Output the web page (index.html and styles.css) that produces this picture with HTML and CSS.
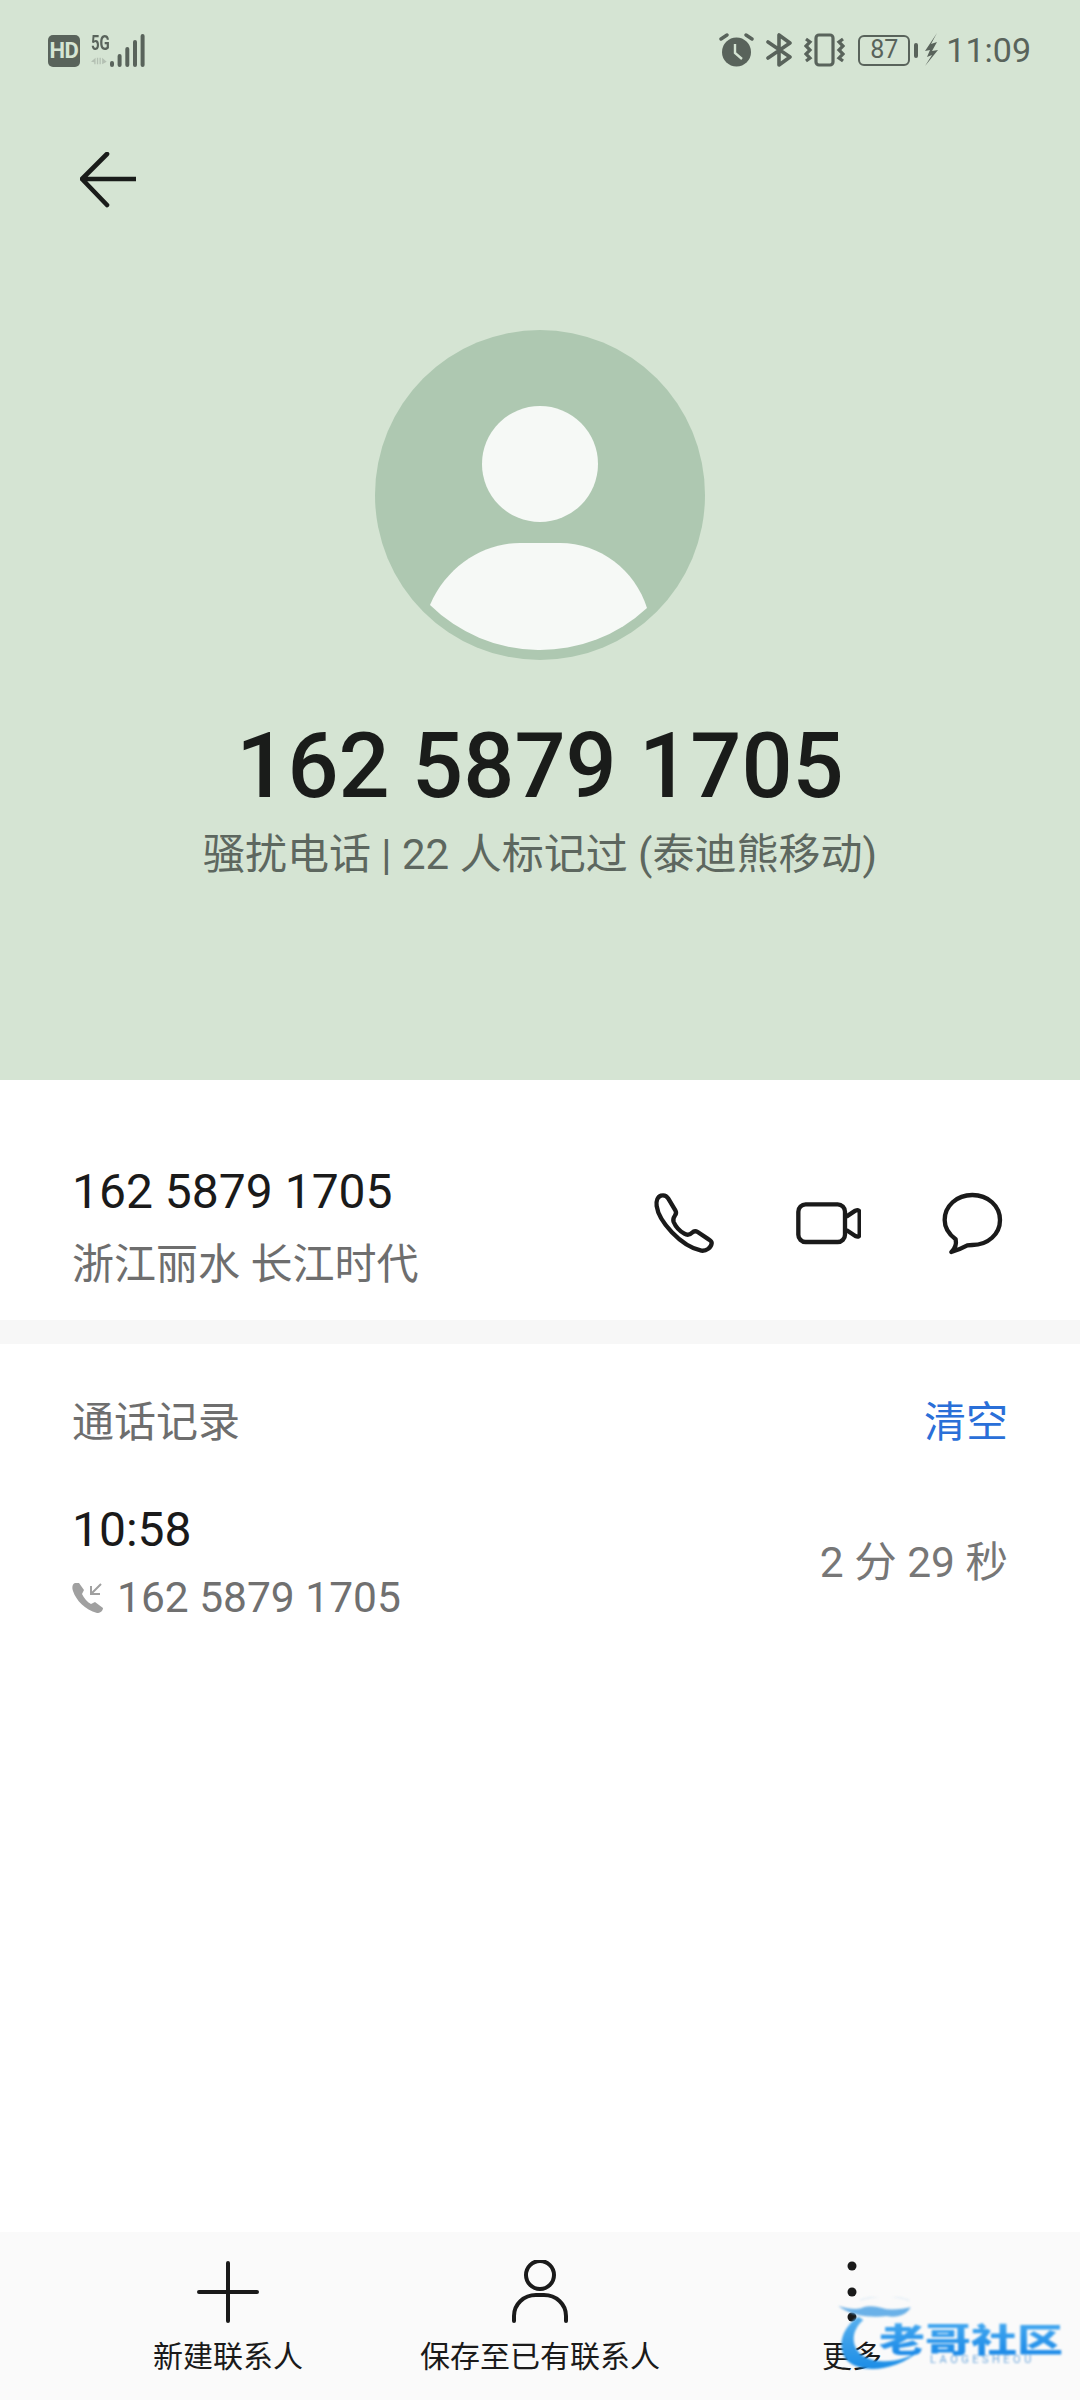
FILE: index.html
```html
<!DOCTYPE html>
<html lang="zh-CN">

<head>
    <meta charset="UTF-8">
    <meta name="viewport" content="width=device-width, initial-scale=1.0">
    <title>162 5879 1705</title>
    <link rel="stylesheet" href="styles.css">
</head>

<body>
    <div class="phone">
        <header class="hero">
            <div class="status-bar">
                <div class="status-left">
                    <span class="hd">HD</span>
                    <div class="signal">
                        <div class="net">
                            <span class="net-5g">5G</span>
                            <svg class="net-arrows" width="26" height="12" viewBox="0 0 26 12">
                                <path d="M0 7 L7 1 V11 H5 V8 Z M11 1 H9 V11 H11 Z M13 1 H15 V11 H13 Z M17 1 L24 7 L17 11 Z" fill="#b4c0b3" />
                            </svg>
                        </div>
                        <svg class="bars" width="36" height="34" viewBox="0 0 36 34">
                            <g fill="none" stroke="#59635b" stroke-width="4" stroke-linecap="round">
                                <path d="M2 30 V32" />
                                <path d="M9.6 23 V32" />
                                <path d="M17.3 16 V32" />
                                <path d="M25 9 V32" />
                                <path d="M32.6 3 V32" />
                            </g>
                        </svg>
                    </div>
                </div>
                <div class="status-right">
                    <svg width="35" height="34" viewBox="0 0 35 34">
                        <circle cx="17.5" cy="19" r="14.5" fill="#59635b" />
                        <path d="M16 11 V20 L23 26" fill="none" stroke="#d5e4d3" stroke-width="2.4" />
                        <path d="M2 6 L8 2 M33 6 L27 2" stroke="#59635b" stroke-width="3.4" stroke-linecap="round" />
                    </svg>
                    <svg width="27" height="34" viewBox="0 0 27 34">
                        <path d="M2 25 L24 10 L13 2 V32 L24 24 L2 9" fill="none" stroke="#59635b" stroke-width="3.6" stroke-linejoin="round" stroke-linecap="round" />
                    </svg>
                    <svg width="41" height="34" viewBox="0 0 41 34">
                        <rect x="12" y="2" width="17" height="30" rx="3" fill="none" stroke="#59635b" stroke-width="3.2" />
                        <path d="M2 6 L6 9 L2 13 L6 17 L2 21 L6 25 L2 28 M39 6 L35 9 L39 13 L35 17 L39 21 L35 25 L39 28" fill="none" stroke="#59635b" stroke-width="3.2" />
                    </svg>
                    <div class="battery">
                        <span class="battery-body">87</span>
                        <span class="battery-nub"></span>
                    </div>
                    <svg class="bolt" width="15" height="34" viewBox="0 0 15 34">
                        <path d="M13 0 L1 18 L6 17 L3 24 L8 22 L1 33 L14 17 L8 18 L13 9 L7 11 Z" fill="#59635b" />
                    </svg>
                    <span class="clock">11:09</span>
                </div>
            </div>

            <div class="back">
                <svg width="56" height="56" viewBox="0 0 56 56">
                    <path d="M27 2 L2 27 L27 53 M3 27 H55" fill="none" stroke="#1a1c1a" stroke-width="4.6" stroke-linecap="round" stroke-linejoin="round" />
                </svg>
            </div>

            <svg class="avatar" width="330" height="330" viewBox="0 0 330 330">
                <circle cx="165" cy="165" r="165" fill="#aec8b1" />
                <circle cx="165" cy="134" r="58" fill="#f6f9f6" />
                <path d="M55 275 C 72 235 110 213 145 213 H185 C 225 213 260 240 272 278 A 157 157 0 0 1 55 275 Z" fill="#f6f9f6" />
            </svg>

            <h1 class="hero-number">162 5879 1705</h1>
            <p class="hero-note">骚扰电话 | 22 人标记过 (泰迪熊移动)</p>
        </header>

        <section class="number-row">
            <div class="number-info">
                <div class="number-main">162 5879 1705</div>
                <div class="number-place">浙江丽水 长江时代</div>
            </div>
            <div class="number-actions">
                <svg width="65" height="65" viewBox="95 125 195 195">
                    <path d="M122 139 C 112 142 107 155 109 170 C 115 215 180 290 243 304 C 258 306 272 295 274 282 C 275 276 270 273 265 270 L 232 248 C 226 244 220 245 215 250 C 208 257 200 258 192 253 C 178 245 165 230 160 218 C 157 210 160 204 164 198 C 168 193 168 188 165 183 L 144 148 C 139 140 130 137 122 139 Z" fill="none" stroke="#1a1a1a" stroke-width="13" stroke-linejoin="round" />
                </svg>
                <svg width="65" height="65" viewBox="525 125 195 195">
                    <rect x="532" y="165" width="140" height="113" rx="22" fill="none" stroke="#1a1a1a" stroke-width="13" />
                    <path d="M676 202 L703 184 Q716 179 716 192 V252 Q716 266 703 260 L676 242" fill="none" stroke="#1a1a1a" stroke-width="13" stroke-linejoin="round" />
                </svg>
                <svg width="65" height="65" viewBox="958 125 195 195">
                    <path d="M1055 137 C 1008 137 972 170 972 212 C 972 235 985 255 1005 270 C 1008 285 1003 298 992 308 C 1010 303 1025 296 1040 288 C 1045 287 1050 287 1055 287 C 1102 287 1138 254 1138 212 C 1138 170 1102 137 1055 137 Z" fill="none" stroke="#1a1a1a" stroke-width="13" stroke-linejoin="round" />
                </svg>
            </div>
        </section>

        <div class="band"></div>

        <section class="calls">
            <div class="calls-head">
                <span class="calls-title">通话记录</span>
                <span class="calls-clear">清空</span>
            </div>
            <div class="call-item">
                <div>
                    <div class="call-time">10:58</div>
                    <div class="call-number">
                        <svg width="32" height="32" viewBox="0 0 32 32">
                            <path d="M3 1 C 0 2 0 6 1 9 C 4 18 13 28 25 31 C 28 31 31 29 31 26 L 23 20 L 19 22 C 15 20 12 16 10 12 L 12 8 L 7 1 Z" fill="#a0a0a0" />
                            <path d="M29 2 L19 12 M19 4 V12 H28" fill="none" stroke="#a0a0a0" stroke-width="2" />
                        </svg>
                        <span>162 5879 1705</span>
                    </div>
                </div>
                <div class="call-length">2 分 29 秒</div>
            </div>
        </section>

        <nav class="bottom-bar">
            <div class="bottom-item">
                <svg width="64" height="64" viewBox="0 0 64 64">
                    <path d="M32 3 V61 M3 32 H61" stroke="#1a1a1a" stroke-width="4" stroke-linecap="round" />
                </svg>
                <span>新建联系人</span>
            </div>
            <div class="bottom-item">
                <svg width="64" height="64" viewBox="0 0 64 64">
                    <circle cx="32" cy="15" r="14" fill="none" stroke="#1a1a1a" stroke-width="4" />
                    <path d="M6 61 V56 C 6 44 16 35 28 35 H36 C 48 35 58 44 58 56 V61" fill="none" stroke="#1a1a1a" stroke-width="4" stroke-linecap="round" />
                </svg>
                <span>保存至已有联系人</span>
            </div>
            <div class="bottom-item">
                <svg width="64" height="64" viewBox="0 0 64 64">
                    <circle cx="32" cy="6" r="4.5" fill="#1a1a1a" />
                    <circle cx="32" cy="32" r="4.5" fill="#1a1a1a" />
                    <circle cx="32" cy="57" r="4.5" fill="#1a1a1a" />
                </svg>
                <span>更多</span>
            </div>
        </nav>

        <div class="watermark">
            <svg class="watermark-mark" width="100" height="76" viewBox="171 231 300 228">
                <defs>
                    <linearGradient id="swoosh" x1="0" y1="0" x2="0" y2="1">
                        <stop offset="0" stop-color="#58b0ee" />
                        <stop offset="1" stop-color="#1b8de6" />
                    </linearGradient>
                </defs>
                <path d="M235 290 C 190 320 170 370 195 415 C 225 455 330 470 430 385 C 370 430 290 435 245 405 C 210 375 215 330 250 300 Z" fill="url(#swoosh)" />
                <path d="M175 258 C 210 268 235 270 250 262 C 270 255 300 262 320 268 C 350 270 375 265 392 262 C 380 285 350 295 320 288 C 290 292 260 290 235 285 C 210 280 190 270 175 258 Z" fill="#5aa9e6" opacity="0.9" />
                <path d="M240 240 C 290 225 350 225 388 242" fill="none" stroke="#d9e9f6" stroke-width="3" />
            </svg>
            <span class="watermark-name">老哥社区</span>
            <span class="watermark-sub">LAOGESHEOU</span>
        </div>
    </div>
</body>

</html>
```

FILE: styles.css
```css
* {
    box-sizing: border-box;
}

body {
    margin: 0;
    background: #fff;
    font-family: Roboto, "Noto Sans CJK SC", sans-serif;
}

.phone {
    position: relative;
    width: 1080px;
    height: 2400px;
    display: flex;
    flex-direction: column;
    overflow: hidden;
    background: #fff;
}

/* green top part */
.hero {
    height: 1080px;
    background: #d5e4d3;
    display: flex;
    flex-direction: column;
    align-items: center;
}

.status-bar {
    width: 100%;
    height: 100px;
    padding: 33px 49px 0 48px;
    display: flex;
    justify-content: space-between;
    align-items: flex-start;
    color: #59635b;
}

.status-left,
.status-right {
    display: flex;
    align-items: center;
}

.hd {
    width: 32px;
    height: 32px;
    margin-top: 2px;
    border-radius: 5px;
    background: #59635b;
    color: #d5e4d3;
    font-size: 22px;
    font-weight: 700;
    line-height: 32px;
    text-align: center;
    letter-spacing: -0.5px;
}

.signal {
    display: flex;
    align-items: flex-end;
    margin-left: 11px;
}

.net {
    display: flex;
    flex-direction: column;
    width: 20px;
}

.net-5g {
    font-size: 20px;
    font-weight: 700;
    line-height: 20px;
    white-space: nowrap;
    transform: scaleX(0.75);
    transform-origin: left center;
}

.net-arrows {
    width: 17px;
    height: 12px;
    margin-top: 2px;
}

.bars {
    margin-left: -1px;
}

.status-right svg {
    display: block;
}

.status-right > svg:nth-child(2) {
    margin-left: 12px;
}

.status-right > svg:nth-child(3) {
    margin-left: 11px;
}

.battery {
    display: flex;
    align-items: center;
    margin-left: 13px;
}

.battery-body {
    width: 52px;
    height: 31px;
    border: 2.5px solid #59635b;
    border-radius: 6px;
    font-size: 25px;
    line-height: 26px;
    text-align: center;
}

.battery-nub {
    width: 4px;
    height: 15px;
    margin-left: 4px;
    border-radius: 2px;
    background: #59635b;
}

.bolt {
    margin-left: 6px;
}

.clock {
    margin-left: 7px;
    font-size: 34px;
    line-height: 34px;
}

.back {
    align-self: flex-start;
    margin: 52px 0 0 80px;
    height: 56px;
}

.back svg,
.avatar {
    display: block;
}

.avatar {
    margin-top: 122px;
}

.hero-number {
    margin: 54px 0 0;
    font-size: 90px;
    font-weight: 500;
    line-height: 106px;
    color: #1a1c1a;
}

.hero-note {
    margin: 10px 0 0;
    font-size: 42px;
    line-height: 50px;
    color: #5d675f;
}

/* number row */
.number-row {
    height: 240px;
    padding: 84px 75px 0 72px;
    display: flex;
    justify-content: space-between;
    align-items: flex-start;
}

.number-main {
    font-size: 48px;
    line-height: 56px;
    color: #1a1a1a;
}

.number-place {
    margin-top: 20px;
    font-size: 42px;
    line-height: 50px;
    color: #6e6e6e;
}

.number-actions {
    display: flex;
    gap: 79px;
    margin-top: 27px;
}

.number-actions svg {
    display: block;
}

.band {
    height: 24px;
    background: #f7f7f7;
}

/* call log */
.calls {
    padding: 51px 72px 0;
    flex: 1;
}

.calls-head {
    display: flex;
    justify-content: space-between;
    font-size: 42px;
    line-height: 56px;
    color: #6e6e6e;
}

.calls-clear {
    color: #2a6fd8;
}

.call-item {
    margin-top: 51px;
    display: flex;
    justify-content: space-between;
    align-items: center;
}

.call-time {
    font-size: 48px;
    line-height: 56px;
    color: #1a1a1a;
}

.call-number {
    margin-top: 15px;
    display: flex;
    align-items: center;
    gap: 13px;
    font-size: 42.5px;
    line-height: 50px;
    color: #707070;
}

.call-number svg {
    display: block;
}

.call-length {
    font-size: 42.5px;
    line-height: 50px;
    color: #777;
}

/* bottom actions */
.bottom-bar {
    height: 168px;
    padding-top: 28px;
    background: #fafafa;
    display: grid;
    grid-template-columns: repeat(3, 312px);
    justify-content: center;
}

.bottom-item {
    display: flex;
    flex-direction: column;
    align-items: center;
    white-space: nowrap;
    font-size: 30px;
    line-height: 40px;
    color: #1a1a1a;
}

.bottom-item svg {
    display: block;
    margin-bottom: 13px;
}

/* site stamp laid over the bottom right corner */
.watermark {
    position: absolute;
    left: 837px;
    top: 2297px;
    width: 225px;
    height: 76px;
    filter: blur(0.8px);
}

.watermark-mark {
    position: absolute;
    left: 0;
    top: 0;
}

.watermark-name {
    position: absolute;
    left: 42px;
    top: 16px;
    font-size: 46px;
    font-weight: 900;
    line-height: 54px;
    white-space: nowrap;
    transform: scaleY(0.72);
    background: linear-gradient(#45a9f0, #1786e6);
    -webkit-background-clip: text;
    background-clip: text;
    color: transparent;
}

.watermark-sub {
    position: absolute;
    left: 93px;
    top: 56px;
    font-size: 11px;
    line-height: 14px;
    letter-spacing: 3.5px;
    color: #6fa8dc;
}
```
